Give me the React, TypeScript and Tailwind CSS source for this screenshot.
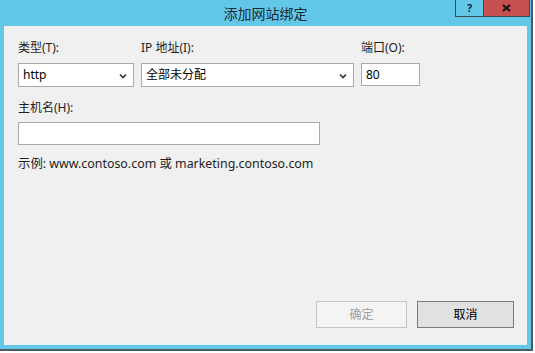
import { useState } from 'react'

const font = { fontFamily: '"Noto Sans", "Noto Sans CJK SC", sans-serif' }

function Chevron() {
  return (
    <svg width="8" height="6" viewBox="0 0 8 6" className="mt-[2px] shrink-0">
      <path d="M1 1.5 L4 4.5 L7 1.5" fill="none" stroke="#333" strokeWidth="1.6" />
    </svg>
  )
}

function Select({ value, width }: { value: string; width: string }) {
  return (
    <div className={`flex h-[24px] items-center justify-between border border-[#a9a9a9] bg-white pl-[4px] pr-[6px] text-[12px] text-black ${width}`}>
      <span>{value}</span>
      <Chevron />
    </div>
  )
}

export default function App() {
  const [port, setPort] = useState('80')
  const [host, setHost] = useState('')

  return (
    <div className="h-[353px] w-[535px] bg-white" style={font}>
      <div className="flex h-[351px] w-[533px] flex-col border-b-2 border-r-2 border-[#4b5a63] bg-[#63c8e8]">
        {/* title bar */}
        <div className="relative flex h-[26px] shrink-0 items-center justify-center">
          <span className="pt-[1px] text-[14px] text-[#1b2a33]">添加网站绑定</span>
          <div className="absolute right-[1px] top-0 flex h-[17px]">
            <div className="flex w-[28px] items-center justify-center border-b border-l border-[#3b4a52] text-[11px] font-bold text-[#12263a]">?</div>
            <div className="flex w-[47px] items-center justify-center border-b border-l border-r border-[#3b4a52] bg-[#c75050]">
              <svg width="9" height="8" viewBox="0 0 9 8">
                <path d="M1 1 L8 7 M8 1 L1 7" stroke="#111" strokeWidth="2" />
              </svg>
            </div>
          </div>
        </div>

        {/* body */}
        <div className="mx-[4px] mb-[4px] flex flex-1 flex-col bg-[#f0f0f0] pb-[17px] pl-[14px] pr-[13px] pt-[14px] text-[12px] text-[#1e1e1e]">
          <div className="flex gap-[7px]">
            <div className="flex flex-col gap-[7px]">
              <span className="h-[16px] leading-[16px]">类型(T):</span>
              <Select value="http" width="w-[116px]" />
            </div>
            <div className="flex flex-col gap-[7px]">
              <span className="h-[16px] leading-[16px]">IP 地址(I):</span>
              <Select value="全部未分配" width="w-[213px]" />
            </div>
            <div className="flex flex-col gap-[7px]">
              <span className="h-[16px] leading-[16px]">端口(O):</span>
              <input
                value={port}
                onChange={(e) => setPort(e.target.value)}
                className="h-[23px] w-[59px] border border-[#a9a9a9] bg-white px-[4px] text-[12px] text-black outline-none"
              />
            </div>
          </div>

          <span className="mt-[13px] h-[16px] leading-[16px]">主机名(H):</span>
          <input
            value={host}
            onChange={(e) => setHost(e.target.value)}
            className="mt-[6px] h-[23px] w-[302px] border border-[#a9a9a9] bg-white px-[4px] text-[12px] outline-none"
          />
          <span className="mt-[11px] text-[12.4px] leading-[16px]">示例: www.contoso.com 或 marketing.contoso.com</span>

          <div className="mt-auto flex justify-end gap-[10px]">
            <button type="button" disabled className="h-[27px] w-[91px] border border-[#c4c4c4] bg-[#f4f4f4] text-[12px] text-[#a0a0a0]">确定</button>
            <button type="button" className="h-[27px] w-[97px] border border-[#7a7a7a] bg-[#e1e1e1] text-[12px] text-black">取消</button>
          </div>
        </div>
      </div>
    </div>
  )
}
